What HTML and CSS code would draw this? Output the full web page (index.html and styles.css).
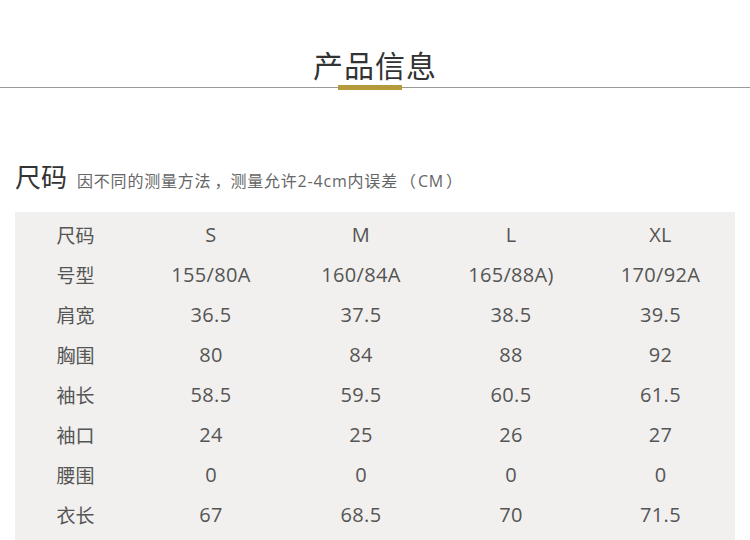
FILE: index.html
```html
<!DOCTYPE html>
<html lang="zh">
<head>
<meta charset="utf-8">
<link rel="stylesheet" href="styles.css">
</head>
<body>
<div class="page">
  <div class="head">
    <h1 class="title">产品信息</h1>
    <div class="rule"><span class="bar"></span></div>
  </div>
  <div class="size-head">
    <span class="size-title">尺码</span>
    <span class="size-note">因不同的测量方法<span class="pc">，</span>测量允许2-4cm内误差<span class="pp">（</span>CM<span class="pp">）</span></span>
  </div>
  <div class="table">
    <div class="row"><span class="lab">尺码</span><span>S</span><span>M</span><span>L</span><span>XL</span></div>
    <div class="row"><span class="lab">号型</span><span>155/80A</span><span>160/84A</span><span>165/88A)</span><span>170/92A</span></div>
    <div class="row"><span class="lab">肩宽</span><span>36.5</span><span>37.5</span><span>38.5</span><span>39.5</span></div>
    <div class="row"><span class="lab">胸围</span><span>80</span><span>84</span><span>88</span><span>92</span></div>
    <div class="row"><span class="lab">袖长</span><span>58.5</span><span>59.5</span><span>60.5</span><span>61.5</span></div>
    <div class="row"><span class="lab">袖口</span><span>24</span><span>25</span><span>26</span><span>27</span></div>
    <div class="row"><span class="lab">腰围</span><span>0</span><span>0</span><span>0</span><span>0</span></div>
    <div class="row"><span class="lab">衣长</span><span>67</span><span>68.5</span><span>70</span><span>71.5</span></div>
  </div>
</div>
</body>
</html>
```
FILE: styles.css
```css
html, body { margin: 0; padding: 0; background: #fff; }
body { font-family: "Open Sans", "Noto Sans CJK SC", sans-serif; color: #555; }
.page { width: 750px; }
.head { padding-top: 44px; display: flex; flex-direction: column; align-items: center; }
.title {
  margin: 0; font-family: "Noto Sans CJK SC", sans-serif; font-weight: 400;
  font-size: 30px; line-height: 40px; color: #333; letter-spacing: 1px;
}
.rule { width: 100%; height: 1px; background: #9a9a9a; margin-top: 3px; position: relative; }
.bar { position: absolute; left: 338px; top: -2px; width: 64px; height: 5px; background: #b59a3c; }
.size-head { margin-top: 70px; padding-left: 15px; display: flex; align-items: baseline; height: 36px; }
.size-title { font-family: "Noto Sans CJK SC", sans-serif; font-size: 26px; color: #333; line-height: 36px; }
.size-note { font-family: "Open Sans", "Noto Sans CJK SC", sans-serif; font-size: 16px; letter-spacing: 0.8px; color: #666; margin-left: 10px; }
.pc { display: inline-block; width: 16px; text-align: left; padding-left: 3px; letter-spacing: 0; font-family: "Noto Sans CJK SC", sans-serif; }
.pp { display: inline-block; width: 16px; text-align: center; letter-spacing: 0; margin: 0 2px; font-family: "Noto Sans CJK SC", sans-serif; }
.table { margin: 18px 15px 0; background: #f1f0ee; padding-top: 2px; padding-bottom: 10px; }
.row { display: grid; grid-template-columns: 121px 150px 150px 150px 149px; height: 40px; align-items: center; font-size: 20px; letter-spacing: 0.3px; color: #555; }
.row span { text-align: center; }
.lab { font-family: "Noto Sans CJK SC", sans-serif; font-size: 19px; letter-spacing: 0; }
```
